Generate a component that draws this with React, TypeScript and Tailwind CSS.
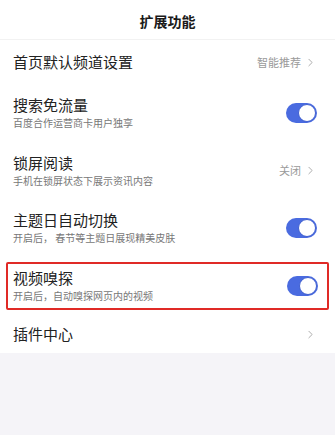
import { ChevronRight } from 'lucide-react';

const font = { fontFamily: '"Noto Sans CJK SC", "Noto Sans", sans-serif' };

function Toggle() {
  return (
    <div className="w-[31px] h-[20px] rounded-full bg-[#4a6be0] flex items-center justify-end pr-[1px] flex-shrink-0">
      <div className="w-[18px] h-[18px] rounded-full bg-white border border-[#3f5fd0]" />
    </div>
  );
}

function Arrow({ label }: { label?: string }) {
  return (
    <div className="flex items-center gap-[3px] text-[11px] text-[#9a9a9a] flex-shrink-0">
      {label && <span>{label}</span>}
      <ChevronRight className="w-[13px] h-[13px] text-[#9a9a9a]" strokeWidth={1.5} />
    </div>
  );
}

export default function App() {
  return (
    <div className="w-[335px] h-[435px] bg-[#f5f4f8] flex flex-col" style={font}>
      {/* Header */}
      <div className="h-[40px] pt-[4px] bg-white flex items-center justify-center border-b border-[#f2f2f2]">
        <span className="text-[14px] font-bold text-[#1a1a1a]">扩展功能</span>
      </div>

      <div className="bg-white flex flex-col">
        <div className="h-[44px] pl-[13px] pr-[18px] flex items-center justify-between">
          <span className="text-[15px] text-[#222]">首页默认频道设置</span>
          <Arrow label="智能推荐" />
        </div>

        <div className="h-[58px] pl-[13px] pr-[18px] flex items-center justify-between">
          <div className="flex flex-col">
            <span className="text-[15px] leading-[20px] text-[#222]">搜索免流量</span>
            <span className="text-[10px] leading-[16px] text-[#777]">百度合作运营商卡用户独享</span>
          </div>
          <Toggle />
        </div>

        <div className="h-[57px] pl-[13px] pr-[18px] flex items-center justify-between">
          <div className="flex flex-col">
            <span className="text-[15px] leading-[20px] text-[#222]">锁屏阅读</span>
            <span className="text-[10px] leading-[16px] text-[#777]">手机在锁屏状态下展示资讯内容</span>
          </div>
          <Arrow label="关闭" />
        </div>

        <div className="h-[58px] pl-[13px] pr-[18px] flex items-center justify-between">
          <div className="flex flex-col">
            <span className="text-[15px] leading-[20px] text-[#222]">主题日自动切换</span>
            <span className="text-[10px] leading-[16px] text-[#777]">开启后， 春节等主题日展现精美皮肤</span>
          </div>
          <Toggle />
        </div>

        <div className="h-[58px] px-[6px] py-[5px] flex">
          <div className="flex-1 border-[2.5px] border-[#e02a26] rounded-[2px] pl-[5px] pr-[9px] flex items-center justify-between">
            <div className="flex flex-col">
              <span className="text-[15px] leading-[20px] text-[#222]">视频嗅探</span>
              <span className="text-[10px] leading-[16px] text-[#777]">开启后，自动嗅探网页内的视频</span>
            </div>
            <Toggle />
          </div>
        </div>

        <div className="h-[38px] pl-[13px] pr-[18px] flex items-center justify-between">
          <span className="text-[15px] text-[#222]">插件中心</span>
          <Arrow />
        </div>
      </div>
    </div>
  );
}
